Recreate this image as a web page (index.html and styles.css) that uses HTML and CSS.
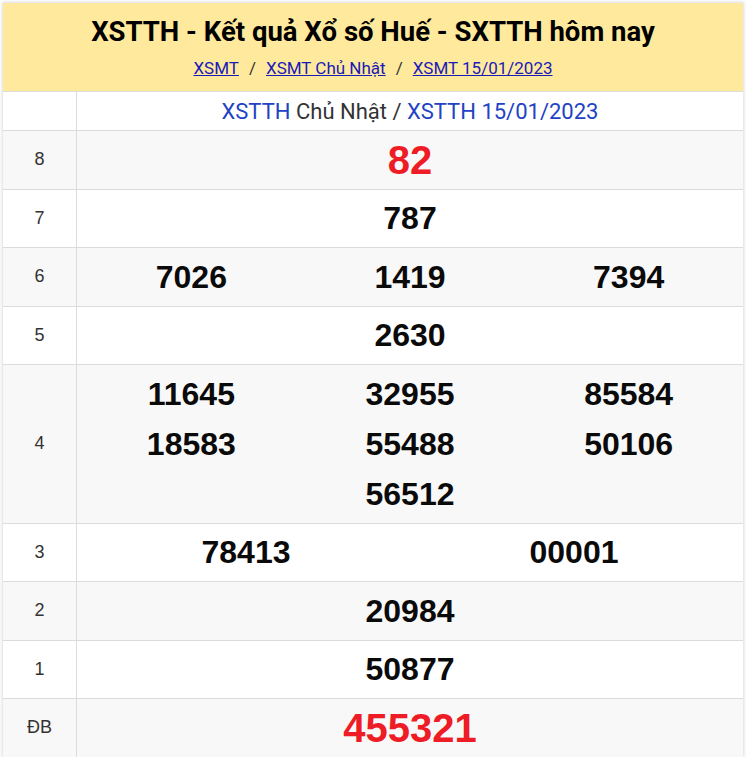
FILE: index.html
```html
<!DOCTYPE html>
<html lang="vi">
<head>
<meta charset="utf-8">
<link rel="stylesheet" href="styles.css">
</head>
<body>
<div class="box">
  <div class="head">
    <h1 class="title">XSTTH - Kết quả Xổ số Huế - SXTTH hôm nay</h1>
    <div class="crumbs"><a href="#">XSMT</a><span class="sep">/</span><a href="#">XSMT Chủ Nhật</a><span class="sep">/</span><a href="#">XSMT 15/01/2023</a></div>
  </div>
  <table class="res">
    <tr class="sub">
      <td class="lbl"></td>
      <td class="subcell"><span class="blue">XSTTH</span> Chủ Nhật / <span class="blue">XSTTH 15/01/2023</span></td>
    </tr>
    <tr class="g">
      <td class="lbl">8</td>
      <td class="num"><div class="cols c1"><span class="big red">82</span></div></td>
    </tr>
    <tr>
      <td class="lbl">7</td>
      <td class="num"><div class="cols c1"><span>787</span></div></td>
    </tr>
    <tr class="g">
      <td class="lbl">6</td>
      <td class="num"><div class="cols c3"><span>7026</span><span>1419</span><span>7394</span></div></td>
    </tr>
    <tr>
      <td class="lbl">5</td>
      <td class="num"><div class="cols c1"><span>2630</span></div></td>
    </tr>
    <tr class="g">
      <td class="lbl">4</td>
      <td class="num"><div class="cols c3"><span>11645</span><span>32955</span><span>85584</span><span>18583</span><span>55488</span><span>50106</span><span></span><span>56512</span><span></span></div></td>
    </tr>
    <tr>
      <td class="lbl">3</td>
      <td class="num"><div class="cols c2"><span>78413</span><span>00001</span></div></td>
    </tr>
    <tr class="g">
      <td class="lbl">2</td>
      <td class="num"><div class="cols c1"><span>20984</span></div></td>
    </tr>
    <tr>
      <td class="lbl">1</td>
      <td class="num"><div class="cols c1"><span>50877</span></div></td>
    </tr>
    <tr class="g">
      <td class="lbl">ĐB</td>
      <td class="num"><div class="cols c1"><span class="big red">455321</span></div></td>
    </tr>
  </table>
</div>
</body>
</html>
```
FILE: styles.css
```css
html, body {
  margin: 0;
  padding: 0;
  background: #ffffff;
}
body {
  padding: 3px 3px 0 3px;
  font-family: Roboto, "Liberation Sans", Arial, sans-serif;
}
.box {
  width: 740px;
  box-shadow: 0 0 3px 1px #dcdcdc;
  background: #fff;
}
.head {
  background: #ffe99c;
  height: 88px;
  border-bottom: 1px solid #dcdcdc;
  text-align: center;
  display: flex;
  flex-direction: column;
  align-items: center;
}
.title {
  margin: 0;
  padding-top: 12px;
  font-family: Roboto, sans-serif;
  font-weight: 700;
  font-size: 27.5px;
  line-height: 33px;
  color: #000;
}
.crumbs {
  margin-top: 10px;
  font-family: Roboto, sans-serif;
  font-size: 17px;
  line-height: 20px;
  color: #333;
}
.crumbs a {
  color: #1a1ab8;
  text-decoration: underline;
}
.sep {
  margin: 0 10px;
  color: #333;
}
.res {
  width: 740px;
  border-collapse: collapse;
  table-layout: fixed;
}
.res td {
  border-top: 1px solid #dcdcdc;
  padding: 0;
}
.res tr:first-child td {
  border-top: none;
}
.res td.lbl {
  width: 73px;
  border-right: 1px solid #dcdcdc;
  text-align: center;
  font-family: "Liberation Sans", Arial, sans-serif;
  font-size: 18px;
  color: #333;
}
.res tr.g td {
  background: #f8f8f8;
}
.sub td {
  height: 38px;
}
.subcell {
  text-align: center;
  font-family: Roboto, sans-serif;
  font-size: 22px;
  color: #333;
}
.blue {
  color: #2242c4;
}
.num {
  padding: 3.75px 5px !important;
}
.cols {
  display: grid;
  font-family: "Liberation Sans", Arial, sans-serif;
  font-weight: 700;
  font-size: 32px;
  line-height: 50px;
  color: #0a0a0a;
  text-align: center;
}
.c1 { grid-template-columns: 1fr; }
.c2 { grid-template-columns: 1fr 1fr; }
.c3 { grid-template-columns: 1fr 1fr 1fr; }
.big {
  font-size: 40px;
}
.red {
  color: #ee1c25;
}
```
